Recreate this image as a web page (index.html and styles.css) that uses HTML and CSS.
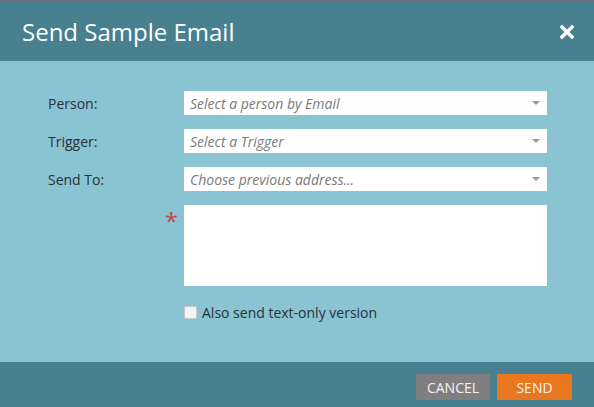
FILE: index.html
```html
<!DOCTYPE html>
<html>
<head>
<meta charset="utf-8">
<link rel="stylesheet" href="styles.css">
</head>
<body>
<div class="dialog">
  <div class="topline"></div>
  <div class="header">
    <h1 class="title">Send Sample Email</h1>
    <svg class="close" width="14" height="14" viewBox="0 0 14 14"><path d="M2 2 L12 12 M12 2 L2 12" stroke="#fff" stroke-width="3.4" stroke-linecap="square"/></svg>
  </div>
  <div class="content">
    <div class="row">
      <label class="label">Person:</label>
      <div class="select"><span class="placeholder">Select a person by Email</span><span class="arrow"></span></div>
    </div>
    <div class="row">
      <label class="label">Trigger:</label>
      <div class="select"><span class="placeholder">Select a Trigger</span><span class="arrow"></span></div>
    </div>
    <div class="row">
      <label class="label">Send To:</label>
      <div class="select"><span class="placeholder">Choose previous address...</span><span class="arrow"></span></div>
    </div>
    <div class="row row-area">
      <div class="req">*</div>
      <div class="area"></div>
    </div>
    <div class="row row-check">
      <div></div>
      <label class="check"><span class="box"></span>Also send text-only version</label>
    </div>
  </div>
  <div class="footer">
    <button class="btn btn-cancel">CANCEL</button>
    <button class="btn btn-send">SEND</button>
  </div>
</div>
</body>
</html>
```
FILE: styles.css
```css
html, body {
  margin: 0;
  padding: 0;
}
body {
  font-family: "Open Sans", "Liberation Sans", sans-serif;
  width: 594px;
  height: 407px;
  overflow: hidden;
}
.dialog {
  display: flex;
  flex-direction: column;
  height: 407px;
  background: #8ac3d2;
}
.topline {
  height: 2px;
  background: #6f7275;
}
.header {
  height: 59px;
  background: #48808f;
  display: flex;
  align-items: center;
  justify-content: space-between;
  padding: 0 20px 0 22px;
}
.title {
  margin: 0;
  font-weight: 400;
  font-size: 24px;
  line-height: 30px;
  color: #ffffff;
}
.close {
  display: block;
}
.content {
  flex: 1;
  padding: 30px 0 0 48px;
  display: flex;
  flex-direction: column;
  gap: 14px;
}
.row {
  display: grid;
  grid-template-columns: 136px 363px;
  align-items: center;
}
.label {
  font-size: 14px;
  color: #263236;
}
.select {
  height: 24px;
  background: #fff;
  display: flex;
  align-items: center;
  justify-content: space-between;
  padding: 0 7px 0 6px;
  box-sizing: border-box;
}
.placeholder {
  font-style: italic;
  font-size: 14px;
  color: #7a7a7a;
}
.arrow {
  width: 0;
  height: 0;
  border-left: 4px solid transparent;
  border-right: 4px solid transparent;
  border-top: 4px solid #9a9a9a;
}
.row-area {
  align-items: start;
}
.req {
  justify-self: end;
  margin-right: 6px;
  color: #c4474a;
  font-size: 24px;
  line-height: 24px;
  height: 24px;
  margin-top: 4px;
}
.area {
  height: 81px;
  background: #fff;
}
.row-check {
  margin-top: 5px;
}
.check {
  display: flex;
  align-items: center;
  font-size: 14px;
  color: #263236;
  height: 14px;
}
.box {
  width: 11px;
  height: 11px;
  background: #f4f4f4;
  border: 1px solid #c9c9c9;
  border-radius: 2px;
  margin-right: 5px;
}
.footer {
  height: 45px;
  background: #48808f;
  display: flex;
  justify-content: flex-end;
  align-items: flex-start;
  gap: 7px;
  padding: 12px 22px 0 0;
  box-sizing: border-box;
}
.btn {
  border: none;
  height: 26px;
  font-family: "Open Sans", "Liberation Sans", sans-serif;
  font-size: 14px;
  color: #f4f4f4;
  padding: 0;
  cursor: pointer;
}
.btn-cancel {
  width: 74px;
  background: #807e7e;
}
.btn-send {
  width: 75px;
  background: #e8771f;
}
```
